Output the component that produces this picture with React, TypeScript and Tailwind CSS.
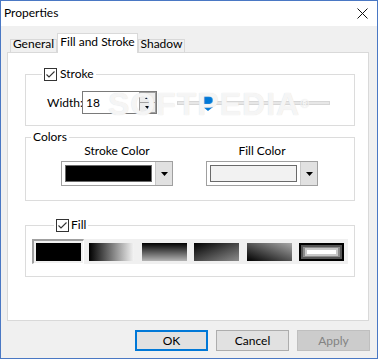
import React from "react";

const Check = () => (
  <span className="w-[13px] h-[13px] border border-[#333333] bg-white flex items-center justify-center shrink-0">
    <svg width="11" height="11" viewBox="0 0 11 11">
      <path d="M1.5 5.5 L4 8 L9.5 2.5" fill="none" stroke="#333333" strokeWidth="1.1" />
    </svg>
  </span>
);

const DownTri = ({ w = 7, h = 4 }: { w?: number; h?: number }) => (
  <svg width={w} height={h} viewBox={`0 0 ${w} ${h}`}>
    <path d={`M0 0 L${w} 0 L${w / 2} ${h} Z`} fill="#000" />
  </svg>
);

const UpTri = ({ w = 5, h = 3 }: { w?: number; h?: number }) => (
  <svg width={w} height={h} viewBox={`0 0 ${w} ${h}`}>
    <path d={`M0 ${h} L${w} ${h} L${w / 2} 0 Z`} fill="#000" />
  </svg>
);

const ColorCombo = ({ swatch }: { swatch: string }) => (
  <div className="w-[112px] h-[25px] flex border border-[#a0a0a0] bg-white">
    <div className="flex-1 p-[3px]">
      <div className={`h-full border border-[#6a6a6a] ${swatch}`} />
    </div>
    <div className="w-[17px] bg-[#e1e1e1] border-l border-[#c8c8c8] flex items-center justify-center">
      <DownTri />
    </div>
  </div>
);

export default function App() {
  return (
    <div className="w-[378px] h-[359px] border border-[#4a78c4] bg-[#f0f0f0] flex flex-col font-['Lato','Liberation_Sans',sans-serif] text-[12px] text-black overflow-hidden">
      {/* title bar */}
      <div className="h-[25px] bg-white flex items-center justify-between pl-[3px] pr-[9px] shrink-0">
        <span className="leading-[14px] mb-[1px]">Properties</span>
        <svg width="11" height="11" viewBox="0 0 11 11">
          <path d="M0.5 0.5 L10.5 10.5 M10.5 0.5 L0.5 10.5" stroke="#111" strokeWidth="1" />
        </svg>
      </div>

      {/* tabs */}
      <div className="mt-[7px] ml-[9px] flex items-end h-[19px] relative z-10">
        <div className="w-[47px] h-[13px] border border-b-0 border-[#d9d9d9] bg-[#f0f0f0] flex justify-center">
          <span className="leading-[12px] -mt-[2px]">General</span>
        </div>
        <div className="w-[81px] h-[20px] -mb-[1px] border border-b-0 border-[#d9d9d9] bg-white flex justify-center">
          <span className="leading-[12px] mt-[2px]">Fill and Stroke</span>
        </div>
        <div className="w-[47px] h-[13px] border border-b-0 border-[#d9d9d9] bg-[#f0f0f0] flex justify-center">
          <span className="leading-[12px] -mt-[2px]">Shadow</span>
        </div>
      </div>

      {/* panel */}
      <div className="relative ml-[6px] w-[362px] h-[269px] border border-[#d9d9d9] bg-white pl-[17px] pt-[21px] flex flex-col shrink-0">
        {/* Stroke group */}
        <div className="relative w-[330px] h-[52px] border border-[#dcdcdc]">
          <div className="absolute left-[16px] -top-[8px] h-[14px] px-[2px] bg-white flex items-center gap-[3px]">
            <Check />
            <span className="leading-[14px]">Stroke</span>
          </div>
          <div className="flex items-center pl-[21px] pt-[16px]">
            <span className="leading-[14px] w-[35px]">Width:</span>
            <div className="w-[75px] h-[23px] border border-[#7a7a7a] bg-white flex">
              <span className="flex-1 pl-[3px] leading-[21px]">18</span>
              <div className="w-[17px] flex flex-col">
                <div className="h-[11px] border border-[#a0a0a0] bg-[#ededed] flex items-center justify-center">
                  <UpTri />
                </div>
                <div className="h-[10px] border border-t-0 border-[#a0a0a0] bg-[#ededed] flex items-center justify-center">
                  <DownTri w={5} h={3} />
                </div>
              </div>
            </div>
            <div className="relative ml-[20px] w-[153px] h-[4px] bg-[#e7e7e7] border border-[#d6d6d6]">
              <svg className="absolute left-[25px] -top-[6px]" width="10" height="15" viewBox="0 0 10 15">
                <path d="M0 0 H8 Q10 0 10 2 V11 L5 15 L0 11 Z" fill="#0078d7" />
              </svg>
            </div>
          </div>
        </div>

        {/* Colors group */}
        <div className="relative mt-[11px] w-[330px] h-[64px] border border-[#dcdcdc]">
          <div className="absolute left-[5px] -top-[8px] h-[14px] px-[2px] bg-white flex items-center">
            <span className="leading-[14px]">Colors</span>
          </div>
          <div className="flex pl-[35px] pt-[6px] gap-[33px]">
            <div className="w-[112px] flex flex-col items-center">
              <span className="leading-[14px]">Stroke Color</span>
              <div className="mt-[3px]">
                <ColorCombo swatch="bg-black" />
              </div>
            </div>
            <div className="w-[112px] flex flex-col items-center">
              <span className="leading-[14px]">Fill Color</span>
              <div className="mt-[3px]">
                <ColorCombo swatch="bg-[#f2f2f2]" />
              </div>
            </div>
          </div>
        </div>

        {/* Fill group */}
        <div className="relative mt-[24px] w-[330px] h-[52px] border border-[#dcdcdc]">
          <div className="absolute left-[28px] -top-[8px] h-[14px] px-[2px] bg-white flex items-center gap-[2px]">
            <Check />
            <span className="leading-[14px]">Fill</span>
          </div>
          <div className="ml-[6px] mt-[13px] w-[316px] h-[25px] bg-[#f0f0f0] flex items-center">
            <div className="w-[52px] h-[25px] border-t-2 border-l-2 border-b border-r border-t-[#a0a0a0] border-l-[#a0a0a0] border-b-white border-r-white p-[2px]">
              <div className="w-[45px] h-[18px] bg-black" />
            </div>
            <div className="ml-[5px] flex items-center gap-[7.5px]">
              <div className="w-[45px] h-[18px] bg-[linear-gradient(to_right,#000000,#f4f4f4)]" />
              <div className="w-[45px] h-[18px] bg-[linear-gradient(to_bottom,#000000,#b4b4b4)]" />
              <div className="w-[45px] h-[18px] bg-[linear-gradient(to_bottom_right,#000000,#8c8c8c)]" />
              <div className="w-[45px] h-[18px] bg-[linear-gradient(to_top_right,#000000,#a8a8a8)]" />
              <div className="w-[45px] h-[18px] bg-black p-[2px] flex">
                <div className="flex-1 bg-[#555555] px-[2px] py-[2px] flex">
                  <div className="flex-1 bg-[#8c8c8c] px-[2px] py-[1px] flex">
                    <div className="flex-1 bg-[#c8c8c8] px-[2px] py-[2px] flex">
                      <div className="flex-1 bg-white" />
                    </div>
                  </div>
                </div>
              </div>
            </div>
          </div>
        </div>

        {/* watermark */}
        <div className="pointer-events-none absolute left-[100px] top-[34px] text-[32px] font-bold tracking-[1px] leading-[34px] text-[rgba(255,255,255,0.75)] [text-shadow:0_0_1px_#d8d8d8] font-['Liberation_Sans',sans-serif]">
          SOFTPEDIA<span className="text-[12px] align-top">®</span>
        </div>
      </div>

      {/* buttons */}
      <div className="mt-[9px] flex justify-end pr-[7px] gap-[8px]">
        <button className="w-[73px] h-[21px] border-2 border-[#0078d7] bg-[#e1e1e1] leading-[14px]">OK</button>
        <button className="w-[73px] h-[21px] border border-[#adadad] bg-[#e1e1e1] leading-[14px]">Cancel</button>
        <button className="w-[73px] h-[21px] border border-[#bfbfbf] bg-[#cccccc] text-[#838383] leading-[14px]">Apply</button>
      </div>
    </div>
  );
}
